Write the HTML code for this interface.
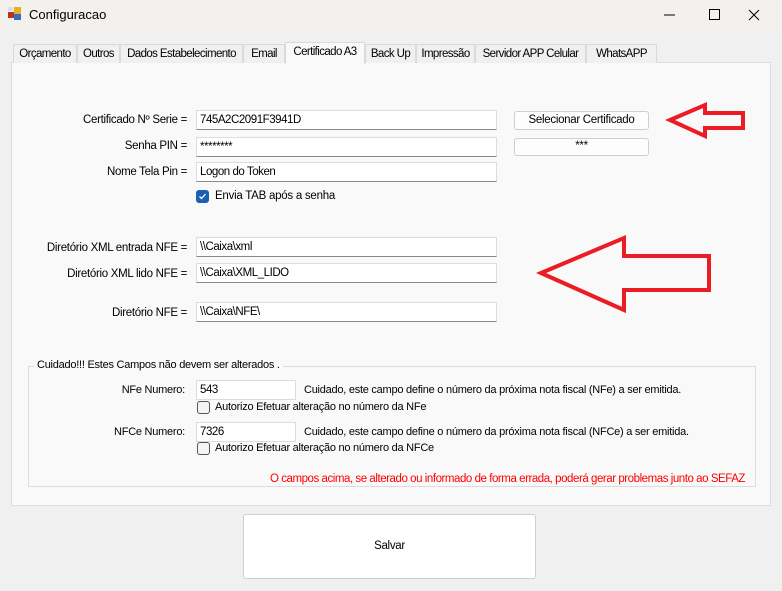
<!DOCTYPE html>
<html><head><meta charset="utf-8"><style>
*{margin:0;padding:0;box-sizing:border-box}
body{width:782px;height:591px;background:#f0f0f0;font-family:"Liberation Sans",sans-serif;font-size:12px;color:#000;position:relative;overflow:hidden}
.a{position:absolute;white-space:nowrap}
.tb{position:absolute;left:0;top:0;width:782px;height:31px;background:#f3f0ed}
.tab{position:absolute;top:44px;height:19px;border:1px solid #dadada;border-bottom:none;background:#f0f0f0;text-align:center;line-height:18px;font-size:11.5px;letter-spacing:-0.6px;overflow:hidden;white-space:nowrap}
.panel{position:absolute;left:11px;top:62px;width:760px;height:444px;background:#f9f9f9;border:1px solid #dcdcdc}
.in{position:absolute;height:20px;background:#fff;border:1px solid #dcdcdc;border-bottom:1px solid #8a8a8a;padding-left:3px;line-height:18px;font-size:11.5px;letter-spacing:-0.45px;white-space:nowrap}
.lbl{position:absolute;text-align:right;font-size:11.5px;letter-spacing:-0.3px;white-space:nowrap}
.btn{position:absolute;background:#fdfdfd;border:1px solid #cfcfcf;border-radius:3px;text-align:center;font-size:11.5px;letter-spacing:-0.3px}
.cb{position:absolute;width:13px;height:13px;border:1px solid #555;border-radius:3px;background:#f5f5f5}
.s{font-size:11px;letter-spacing:-0.25px}
</style></head><body>
<div class="tb"></div>
<svg class="a" style="left:8px;top:7px" width="14" height="14"><rect x="0" y="5" width="6" height="6" fill="#c03020"/><rect x="6" y="0" width="7" height="7" fill="#e8b020"/><rect x="6" y="7" width="7" height="6" fill="#3070c0"/><rect x="0" y="0" width="5" height="4" fill="#ddd"/></svg>
<div class="a" style="left:29px;top:7px;font-size:13px">Configuracao</div>
<svg class="a" style="left:660px;top:8px" width="100" height="14"><path d="M4 7h11" stroke="#000"/><rect x="49.5" y="1.5" width="10" height="10" fill="none" stroke="#000"/><path d="M92 2l10 10M102 2l-10 10" stroke="#000" transform="translate(-3,0)"/></svg>

<div class="panel"></div>
<div class="tab" style="left:13px;width:64px">Orçamento</div>
<div class="tab" style="left:77px;width:43px">Outros</div>
<div class="tab" style="left:120px;width:123px">Dados Estabelecimento</div>
<div class="tab" style="left:243px;width:42px">Email</div>
<div class="tab" style="left:285px;top:42px;height:22px;width:80px;background:#f9f9f9;line-height:18px">Certificado A3</div>
<div class="tab" style="left:365px;width:51px">Back Up</div>
<div class="tab" style="left:416px;width:59px">Impressão</div>
<div class="tab" style="left:475px;width:111px">Servidor APP Celular</div>
<div class="tab" style="left:586px;width:71px">WhatsAPP</div>

<div class="lbl" style="right:595px;top:114px">Certificado Nº Serie =</div>
<div class="in" style="left:196px;top:110px;width:301px">745A2C2091F3941D</div>
<div class="lbl" style="right:595px;top:140px">Senha PIN =</div>
<div class="in" style="left:196px;top:137px;width:301px">********</div>
<div class="lbl" style="right:595px;top:166px">Nome Tela Pin =</div>
<div class="in" style="left:196px;top:162px;width:301px">Logon do Token</div>
<div class="cb" style="left:196px;top:190px;background:#1a5fb4;border-color:#1a5fb4"><svg width="11" height="11" style="position:absolute;left:0;top:0"><path d="M2.5 5.5l2 2 4-4.5" stroke="#fff" stroke-width="1.3" fill="none"/></svg></div>
<div class="a s" style="left:215px;top:190px;font-size:11.5px">Envia TAB após a senha</div>
<div class="btn" style="left:514px;top:111px;width:135px;height:19px;line-height:17px">Selecionar Certificado</div>
<div class="btn" style="left:514px;top:138px;width:135px;height:18px;line-height:14px">***</div>

<div class="lbl" style="right:595px;top:242px">Diretório XML entrada NFE =</div>
<div class="in" style="left:196px;top:237px;width:301px">\\Caixa\xml</div>
<div class="lbl" style="right:595px;top:268px">Diretório XML lido NFE =</div>
<div class="in" style="left:196px;top:263px;width:301px">\\Caixa\XML_LIDO</div>
<div class="lbl" style="right:595px;top:307px">Diretório NFE =</div>
<div class="in" style="left:196px;top:302px;width:301px">\\Caixa\NFE\</div>

<svg class="a" style="left:0;top:0" width="782" height="591"><g fill="none" stroke="#ec1c24" stroke-width="4" stroke-linejoin="miter"><path d="M670 120L705 105V113H743V128H705V136Z"/><path d="M541 273L624 238V256H709V290H624V310Z"/></g></svg>

<div class="a" style="left:28px;top:366px;width:728px;height:121px;border:1px solid #dcdcdc"></div>
<div class="a s" style="left:34px;top:359px;background:#f9f9f9;padding:0 3px">Cuidado!!! Estes Campos não devem ser alterados .</div>
<div class="lbl s" style="right:597px;top:384px">NFe Numero:</div>
<div class="in" style="left:196px;top:380px;width:100px;border-bottom-color:#dcdcdc">543</div>
<div class="a s" style="left:304px;top:384px">Cuidado, este campo define o número da próxima nota fiscal (NFe) a ser emitida.</div>
<div class="cb" style="left:197px;top:401px"></div>
<div class="a s" style="left:215px;top:401px">Autorizo Efetuar alteração no número da NFe</div>
<div class="lbl s" style="right:597px;top:426px">NFCe Numero:</div>
<div class="in" style="left:196px;top:422px;width:100px;border-bottom-color:#dcdcdc">7326</div>
<div class="a s" style="left:304px;top:426px">Cuidado, este campo define o número da próxima nota fiscal (NFCe) a ser emitida.</div>
<div class="cb" style="left:197px;top:442px"></div>
<div class="a s" style="left:215px;top:442px">Autorizo Efetuar alteração no número da NFCe</div>
<div class="a" style="right:37px;top:473px;color:#ff0000;font-size:11.5px;letter-spacing:-0.45px">O campos acima, se alterado ou informado de forma errada, poderá gerar problemas junto ao SEFAZ</div>

<div class="btn" style="left:243px;top:514px;width:293px;height:65px;line-height:63px;background:#fff">Salvar</div>
</body></html>
